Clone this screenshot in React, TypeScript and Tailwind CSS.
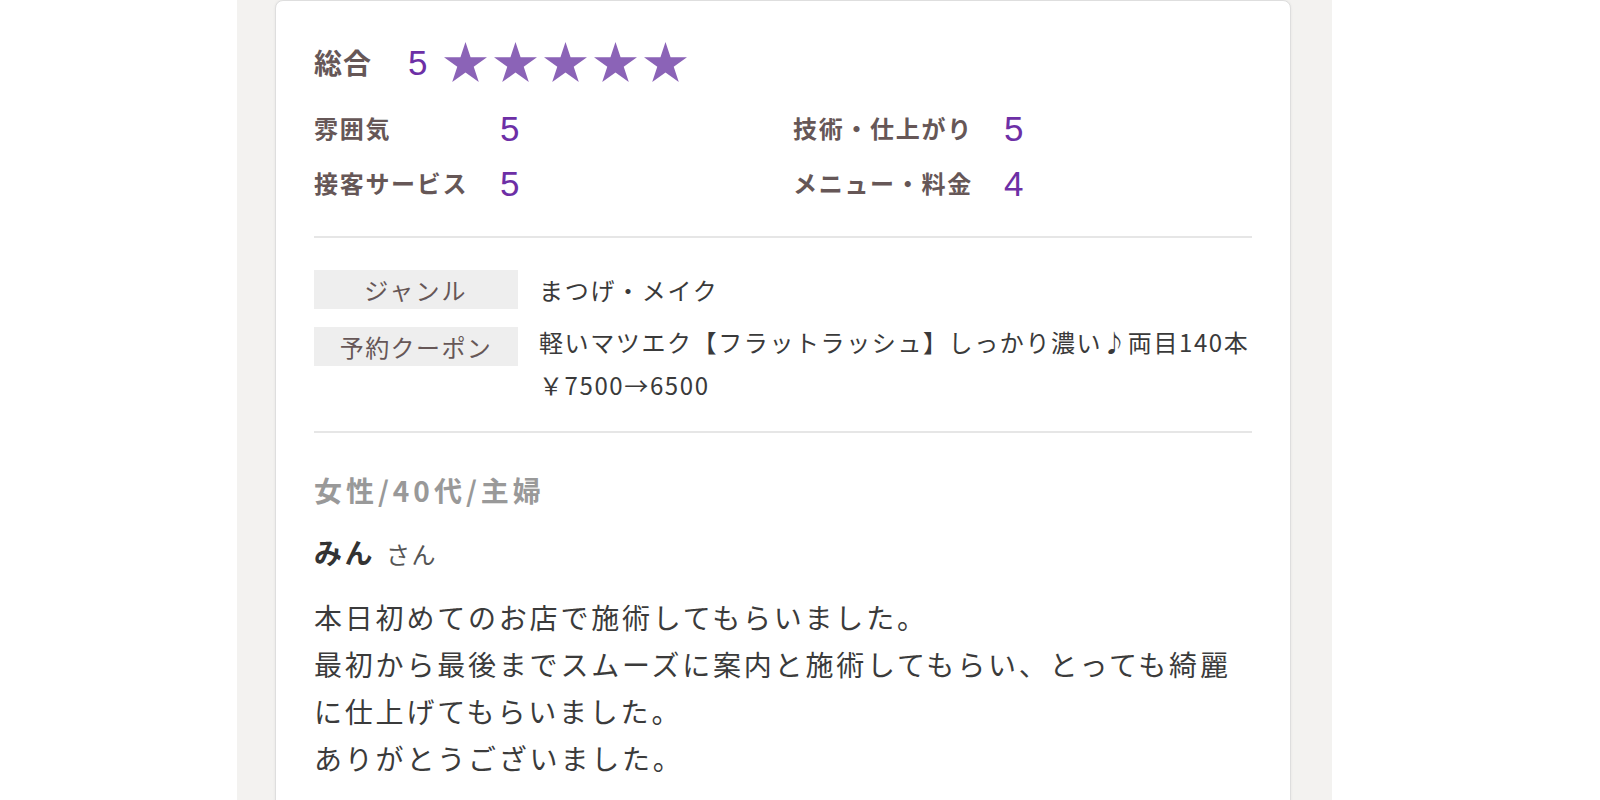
import React from 'react';

const jp = { fontFamily: '"Noto Sans CJK JP", "Noto Sans", sans-serif' };

const Star = () => (
  <svg width="43" height="40" viewBox="2.45 0 95.1 90.45" preserveAspectRatio="none">
    <polygon
      points="50,0 61.23,34.55 97.55,34.55 68.17,55.9 79.39,90.45 50,69.1 20.61,90.45 31.83,55.9 2.45,34.55 38.77,34.55"
      fill="#8b63b7"
    />
  </svg>
);

interface RatingProps {
  label: string;
  value: number;
  labelClass: string;
}

const RatingItem = ({ label, value, labelClass }: RatingProps) => (
  <div className="flex items-center h-[36px]">
    <span className={`${labelClass} text-[24px] leading-[36px] font-bold tracking-[1.7px] text-[#665757]`}>
      {label}
    </span>
    <span className="font-['Liberation_Sans'] text-[35px] leading-none text-[#6d2fa6]">{value}</span>
  </div>
);

export default function App() {
  return (
    <div className="min-h-screen w-full bg-white flex" style={jp}>
      <div className="ml-[237px] w-[1095px] min-h-screen bg-[#f3f2f0] pl-[38px] pr-[41px]">
        <div className="bg-white border border-[#dedede] rounded-[8px] shadow-[0_0_3px_rgba(0,0,0,0.06)] px-[38px] pt-[41px] pb-[40px]">
          {/* overall */}
          <div className="flex items-center h-[40px]">
            <span className="w-[94px] text-[28px] leading-[40px] font-bold tracking-[1px] text-[#665757]">総合</span>
            <span className="font-['Liberation_Sans'] text-[35px] leading-none text-[#6d2fa6]">5</span>
            <div className="flex gap-[7px] ml-[17px]">
              <Star />
              <Star />
              <Star />
              <Star />
              <Star />
            </div>
          </div>

          {/* detail ratings */}
          <div className="grid grid-cols-[479px_1fr] gap-y-[19px] mt-[28px]">
            <RatingItem label="雰囲気" value={5} labelClass="w-[186px]" />
            <RatingItem label="技術・仕上がり" value={5} labelClass="w-[211px]" />
            <RatingItem label="接客サービス" value={5} labelClass="w-[186px]" />
            <RatingItem label="メニュー・料金" value={4} labelClass="w-[211px]" />
          </div>

          <div className="h-[2px] bg-[#e6e6e6] mt-[35px]" />

          {/* genre / coupon */}
          <div className="mt-[32px] flex flex-col gap-[18px]">
            <div className="flex items-start gap-[21px]">
              <div className="w-[204px] h-[39px] shrink-0 bg-[#eeeeee] flex items-center justify-center text-[24px] tracking-[2.2px] text-[#665757]">
                ジャンル
              </div>
              <div className="text-[24px] leading-[39px] tracking-[1.7px] text-[#3a3a3a]">まつげ・メイク</div>
            </div>
            <div className="flex items-start gap-[21px]">
              <div className="w-[204px] h-[39px] shrink-0 bg-[#eeeeee] flex items-center justify-center text-[24px] tracking-[1.4px] text-[#665757]">
                予約クーポン
              </div>
              <div className="-mt-[6px] text-[24px] leading-[42.5px] tracking-[1.6px] text-[#3a3a3a]">
                軽いマツエク【フラットラッシュ】しっかり濃い♪両目140本
                <br />
                ￥7500→6500
              </div>
            </div>
          </div>

          <div className="h-[2px] bg-[#e6e6e6] mt-[25px]" />

          {/* reviewer */}
          <div className="mt-[37px] text-[28px] leading-[40px] font-bold tracking-[4px] text-[#999999]">女性/40代/主婦</div>
          <div className="mt-[22px] flex items-baseline leading-[40px]">
            <span className="text-[28px] font-bold tracking-[2.5px] text-[#333333]">みん</span>
            <span className="ml-[11px] text-[24px] tracking-[1.5px] text-[#555555]">さん</span>
          </div>

          <p className="mt-[20px] text-[28px] leading-[47px] tracking-[2.8px] text-[#3b3b3b]">
            本日初めてのお店で施術してもらいました。
            <br />
            最初から最後までスムーズに案内と施術してもらい、とっても綺麗
            <br />
            に仕上げてもらいました。
            <br />
            ありがとうございました。
          </p>
        </div>
      </div>
    </div>
  );
}
